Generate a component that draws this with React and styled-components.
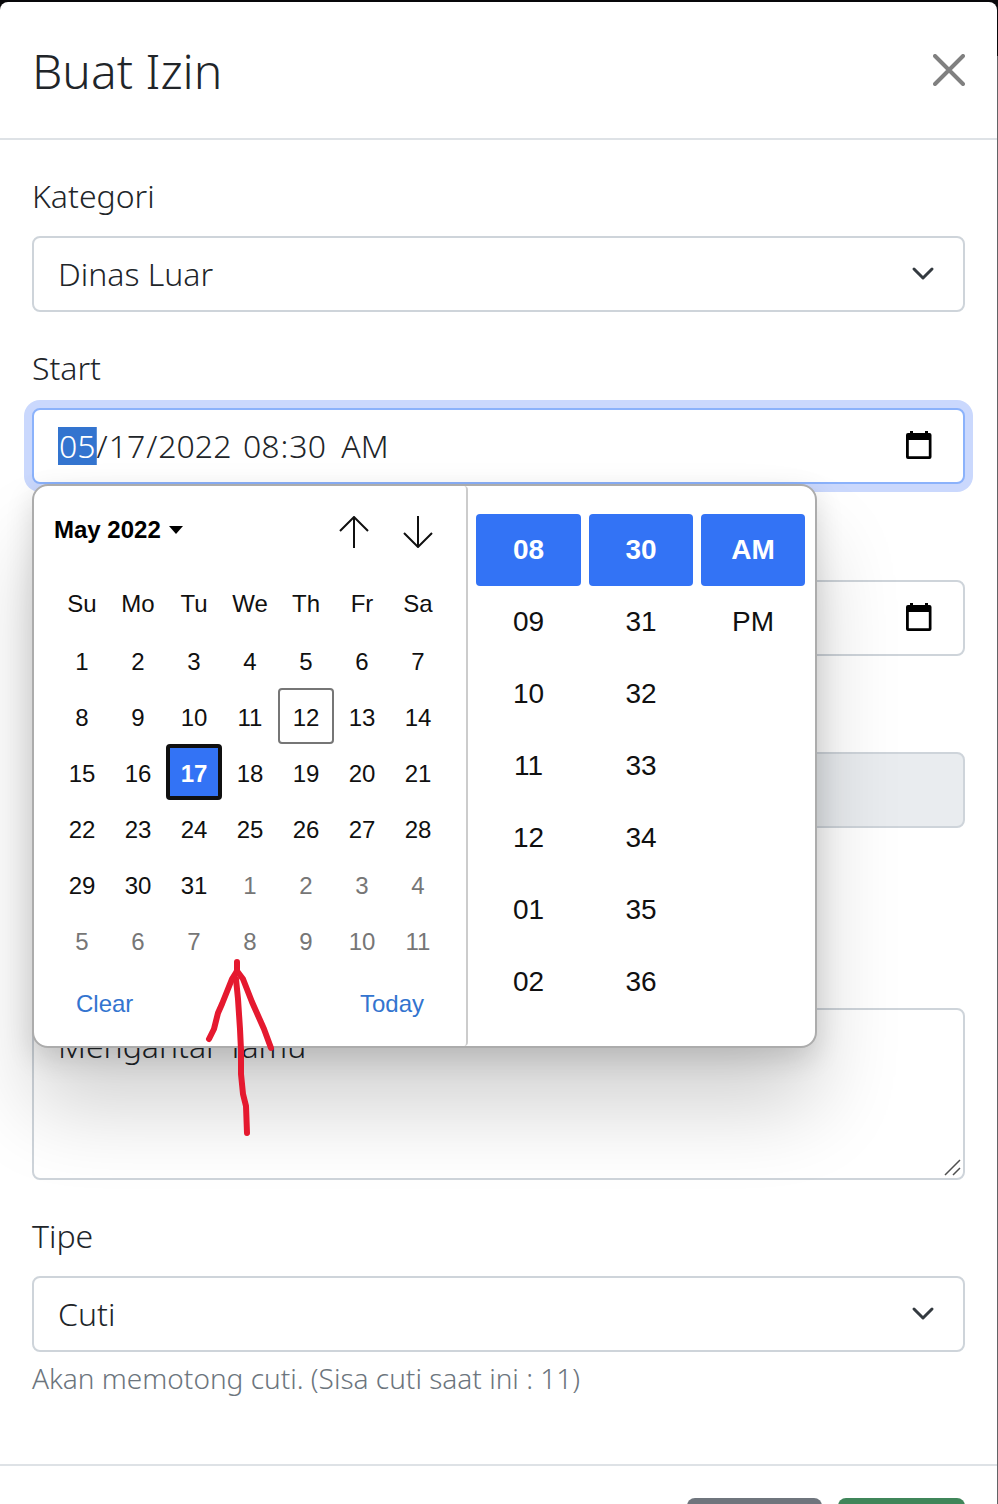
import React from "react";
import styled, { createGlobalStyle, css } from "styled-components";

const uiFont = `"Noto Sans", "Open Sans", sans-serif`;
const pickerFont = `"Liberation Sans", Arial, sans-serif`;

const GlobalStyle = createGlobalStyle`
  *, *::before, *::after { box-sizing: border-box; }
  body { margin: 0; background: #000; }
  button, input, select, textarea { font: inherit; color: inherit; margin: 0; }
`;

const Backdrop = styled.div`
  height: 100vh;
  overflow: hidden;
  padding: 2px 1px 0 0;
  background: linear-gradient(#08080a 56px, #626466 56px);
  font-family: ${uiFont};
  font-weight: 300;
  font-size: 32px;
  line-height: 48px;
  color: #212529;
`;

const Modal = styled.section`
  background: #fff;
  border-radius: 8px;
`;

const ModalHeader = styled.header`
  display: flex;
  align-items: center;
  justify-content: space-between;
  padding: 32px;
  border-bottom: 2px solid #dee2e6;
`;

const Title = styled.h1`
  margin: 0;
  padding-top: 2px;
  font-size: 48px;
  line-height: 70px;
  font-weight: 300;
`;

const CloseButton = styled.button`
  display: flex;
  padding: 0;
  border: 0;
  background: none;
  color: #808080;
`;

const Form = styled.form`
  display: flex;
  flex-direction: column;
  gap: 32px;
  padding: 32px 32px 68px;
`;

const Field = styled.div`
  display: flex;
  flex-direction: column;
`;

const Label = styled.label`
  margin-bottom: 16px;
  visibility: ${(p) => (p.$covered ? "hidden" : "visible")};
`;

const ControlWrap = styled.div`
  position: relative;
  display: flex;
`;

const controlStyle = css`
  display: block;
  width: 100%;
  height: 76px;
  padding: 12px 24px;
  border: 2px solid #ced4da;
  border-radius: 8px;
  background: #fff;
  outline: 0;
`;

const Select = styled.select`
  ${controlStyle}
  appearance: none;
`;

const Chevron = styled.svg`
  position: absolute;
  right: 26px;
  top: 22px;
  pointer-events: none;
`;

const DateTimeBox = styled.div`
  ${controlStyle}
  display: flex;
  align-items: center;
  gap: 8px;
  ${(p) =>
    p.$active &&
    css`
      border-color: #8bb2fb;
      box-shadow: 0 0 0 8px #cad8fd;
    `}
`;

const DatePart = styled.input`
  width: 176px;
  padding: 0;
  border: 0;
  outline: 0;
  background: none;
  &::-webkit-calendar-picker-indicator {
    display: none;
  }
  &::-webkit-datetime-edit-month-field {
    background: linear-gradient(#3374cf, #3374cf) center / 100% 38px no-repeat;
    color: #fff;
  }
  &::-webkit-datetime-edit-ampm-field {
    margin-left: 8px;
  }
`;

const CalendarButton = styled.button`
  position: absolute;
  right: 30px;
  top: 20px;
  display: flex;
  padding: 0;
  border: 0;
  background: none;
  color: #000;
`;

const TextInput = styled.input`
  ${controlStyle}
  &:disabled {
    background: #e9ecef;
  }
`;

const TextArea = styled.textarea`
  ${controlStyle}
  height: auto;
  resize: none;
`;

const Grip = styled.svg`
  position: absolute;
  right: 2px;
  bottom: 2px;
  pointer-events: none;
`;

const Hint = styled.div`
  margin-top: 8px;
  font-size: 28px;
  line-height: 36px;
  color: #6c757d;
`;

const HintSpace = styled.div`
  height: 84px;
`;

const ModalFooter = styled.footer`
  display: flex;
  justify-content: flex-end;
  gap: 16px;
  padding: 32px;
  border-top: 2px solid #dee2e6;
`;

const ActionButton = styled.button`
  width: ${(p) => (p.$primary ? 127 : 135)}px;
  height: 76px;
  border: 0;
  border-radius: 8px;
  background: ${(p) => (p.$primary ? "#40865a" : "#6f757d")};
`;

const Picker = styled.div`
  position: absolute;
  z-index: 2;
  top: 100%;
  left: 0;
  display: flex;
  width: 785px;
  height: 564px;
  border: 2px solid #acacac;
  border-radius: 16px;
  background: #fff;
  box-shadow: 0 60px 84px rgba(0, 0, 0, 0.18), 0 10px 28px rgba(0, 0, 0, 0.14);
  color: #101010;
  font-family: ${pickerFont};
  font-size: 24px;
  font-weight: 400;
  line-height: 28px;
`;

const CalendarPane = styled.div`
  display: flex;
  flex-direction: column;
  width: 434px;
  padding: 0 16px 0 20px;
  border-right: 2px solid #ccc;
  border-radius: 0 4px 4px 0;
`;

const CalendarHeader = styled.div`
  display: flex;
  align-items: center;
  height: 90px;
  padding-bottom: 2px;
`;

const MonthButton = styled.button`
  display: flex;
  align-items: center;
  gap: 8px;
  margin-right: auto;
  padding: 0;
  border: 0;
  background: none;
  color: #000;
  font-weight: 700;
`;

const StepButton = styled.button`
  display: flex;
  justify-content: center;
  width: 64px;
  padding: 4px 0 0;
  border: 0;
  background: none;
`;

const Days = styled.table`
  border-collapse: collapse;
  table-layout: fixed;
  width: 392px;
  th,
  td {
    width: 56px;
    height: 56px;
    padding: 0;
    font-weight: 400;
    text-align: center;
  }
`;

const DayButton = styled.button`
  display: block;
  width: 56px;
  height: 56px;
  padding: 4px 0 0;
  border: 0 solid #101010;
  border-radius: 4px;
  background: none;
  color: ${(p) => (p.$muted ? "#767676" : "#101010")};
  ${(p) =>
    p.$today &&
    css`
      border: 2px solid #767676;
    `}
  ${(p) =>
    p.$selected &&
    css`
      border-width: 4px;
      background: #3373f5;
      color: #fff;
      font-weight: 700;
    `}
`;

const CalendarFooter = styled.div`
  display: flex;
  justify-content: space-between;
  width: 392px;
  padding: 22px;
`;

const LinkButton = styled.button`
  padding: 0;
  border: 0;
  background: none;
  color: #3374cf;
`;

const TimePane = styled.div`
  flex: 1;
  display: grid;
  grid-template-columns: 105px 1fr 1fr;
  gap: 8px;
  padding: 28px 10px 28px 8px;
`;

const TimeColumn = styled.div`
  display: flex;
  flex-direction: column;
`;

const TimeButton = styled.button`
  height: 72px;
  padding: 0;
  border: 0;
  border-radius: 4px;
  background: ${(p) => (p.$selected ? "#3373f5" : "none")};
  color: ${(p) => (p.$selected ? "#fff" : "#101010")};
  font-size: 28px;
  font-weight: ${(p) => (p.$selected ? 700 : 400)};
`;

const Annotation = styled.svg`
  position: absolute;
  z-index: 3;
  left: 172px;
  top: 548px;
  pointer-events: none;
`;

const weekdays = ["Su", "Mo", "Tu", "We", "Th", "Fr", "Sa"];
const weeks = Array.from({ length: 6 }, (_, w) =>
  Array.from({ length: 7 }, (_, d) => w * 7 + d + 1)
);
const times = [
  ["08", "09", "10", "11", "12", "01", "02"],
  ["30", "31", "32", "33", "34", "35", "36"],
  ["AM", "PM"],
];

function SelectField({ id, label, value, children }) {
  return (
    <Field>
      <Label htmlFor={id}>{label}</Label>
      <ControlWrap>
        <Select id={id} defaultValue={value}>
          <option>{value}</option>
        </Select>
        <Chevron width="32" height="32" viewBox="0 0 16 16" fill="none" stroke="#343a40" strokeWidth="1.5" strokeLinecap="round" strokeLinejoin="round">
          <path d="M3.5 5.5 8 10l4.5-4.5" />
        </Chevron>
      </ControlWrap>
      {children}
    </Field>
  );
}

function CalendarIcon() {
  return (
    <CalendarButton type="button" aria-label="Show date picker">
      <svg width="32" height="32" viewBox="0 0 32 32">
        <path
          fill="currentColor"
          fillRule="evenodd"
          d="M7 3h3v2h12V3h3v2h1.500a2 2 0 0 1 2 2v22a2 2 0 0 1-2 2H5a2 2 0 0 1-2-2V7a2 2 0 0 1 2-2h2zM5.800 12v16.200h20V12z"
        />
      </svg>
    </CalendarButton>
  );
}

function DateTimePicker() {
  return (
    <Picker role="dialog" aria-label="May 2022">
      <CalendarPane>
        <CalendarHeader>
          <MonthButton type="button">
            May 2022
            <svg width="14" height="8" viewBox="0 0 14 8">
              <path d="M0 0h14L7 8z" fill="#000" />
            </svg>
          </MonthButton>
          <StepButton type="button" aria-label="Previous month">
            <svg width="32" height="32" viewBox="0 0 32 32" fill="none" stroke="#101010" strokeWidth="2">
              <path d="M16 32V1M2 15 16 1l14 14" />
            </svg>
          </StepButton>
          <StepButton type="button" aria-label="Next month">
            <svg width="32" height="32" viewBox="0 0 32 32" fill="none" stroke="#101010" strokeWidth="2">
              <path d="M16 0v31M2 17l14 14 14-14" />
            </svg>
          </StepButton>
        </CalendarHeader>
        <Days>
          <thead>
            <tr>
              {weekdays.map((d) => (
                <th key={d} scope="col">{d}</th>
              ))}
            </tr>
          </thead>
          <tbody>
            {weeks.map((week) => (
              <tr key={week[0]}>
                {week.map((n) => (
                  <td key={n}>
                    <DayButton type="button" $muted={n > 31} $today={n === 12} $selected={n === 17}>
                      {n > 31 ? n - 31 : n}
                    </DayButton>
                  </td>
                ))}
              </tr>
            ))}
          </tbody>
        </Days>
        <CalendarFooter>
          <LinkButton type="button">Clear</LinkButton>
          <LinkButton type="button">Today</LinkButton>
        </CalendarFooter>
      </CalendarPane>
      <TimePane>
        {times.map((column) => (
          <TimeColumn key={column[0]}>
            {column.map((t, i) => (
              <TimeButton key={t} type="button" $selected={i === 0}>{t}</TimeButton>
            ))}
          </TimeColumn>
        ))}
      </TimePane>
    </Picker>
  );
}

export default function App() {
  return (
    <Backdrop>
      <GlobalStyle />
      <Modal role="dialog" aria-labelledby="title">
        <ModalHeader>
          <Title id="title">Buat Izin</Title>
          <CloseButton type="button" aria-label="Close">
            <svg width="32" height="32" viewBox="0 0 32 32" stroke="currentColor" strokeWidth="4" strokeLinecap="round">
              <path d="M2 2l28 28M30 2 2 30" />
            </svg>
          </CloseButton>
        </ModalHeader>
        <Form>
          <SelectField id="kategori" label="Kategori" value="Dinas Luar" />
          <Field>
            <Label htmlFor="start">Start</Label>
            <ControlWrap>
              <DateTimeBox $active>
                <DatePart id="start" type="date" defaultValue="2022-05-17" />
                <DatePart type="time" aria-label="Start time" defaultValue="08:30" />
              </DateTimeBox>
              <CalendarIcon />
              <DateTimePicker />
              <Annotation width="80" height="184" viewBox="204 956 80 184" fill="none" stroke="#e5192f" strokeWidth="6" strokeLinecap="round" strokeLinejoin="round">
                <path d="M237 962v9l-5 8-10 25-4 9-4 16-5 10" />
                <path d="M237 971l6 8 9 23 8 18 4 9 7 19" />
                <path d="M236 979l2 20 2 30 1 21 0 24 2 20 3 12 1 27" />
              </Annotation>
            </ControlWrap>
          </Field>
          <Field>
            <Label htmlFor="end" $covered>End</Label>
            <ControlWrap>
              <TextInput id="end" type="text" />
              <CalendarIcon />
            </ControlWrap>
          </Field>
          <Field>
            <Label htmlFor="durasi" $covered>Durasi</Label>
            <TextInput id="durasi" type="text" disabled />
            <HintSpace />
          </Field>
          <Field>
            <Label htmlFor="alasan" $covered>Alasan</Label>
            <ControlWrap>
              <TextArea id="alasan" rows={3} defaultValue="Mengantar Tamu" />
              <Grip width="20" height="20" viewBox="0 0 20 20" stroke="#505050" strokeWidth="1.500">
                <path d="M2 17 17 2M10 17l7-7" />
              </Grip>
            </ControlWrap>
          </Field>
          <SelectField id="tipe" label="Tipe" value="Cuti">
            <Hint>Akan memotong cuti. (Sisa cuti saat ini : 11)</Hint>
          </SelectField>
        </Form>
        <ModalFooter>
          <ActionButton type="button" aria-label="Cancel" />
          <ActionButton type="submit" aria-label="Submit" $primary />
        </ModalFooter>
      </Modal>
    </Backdrop>
  );
}
